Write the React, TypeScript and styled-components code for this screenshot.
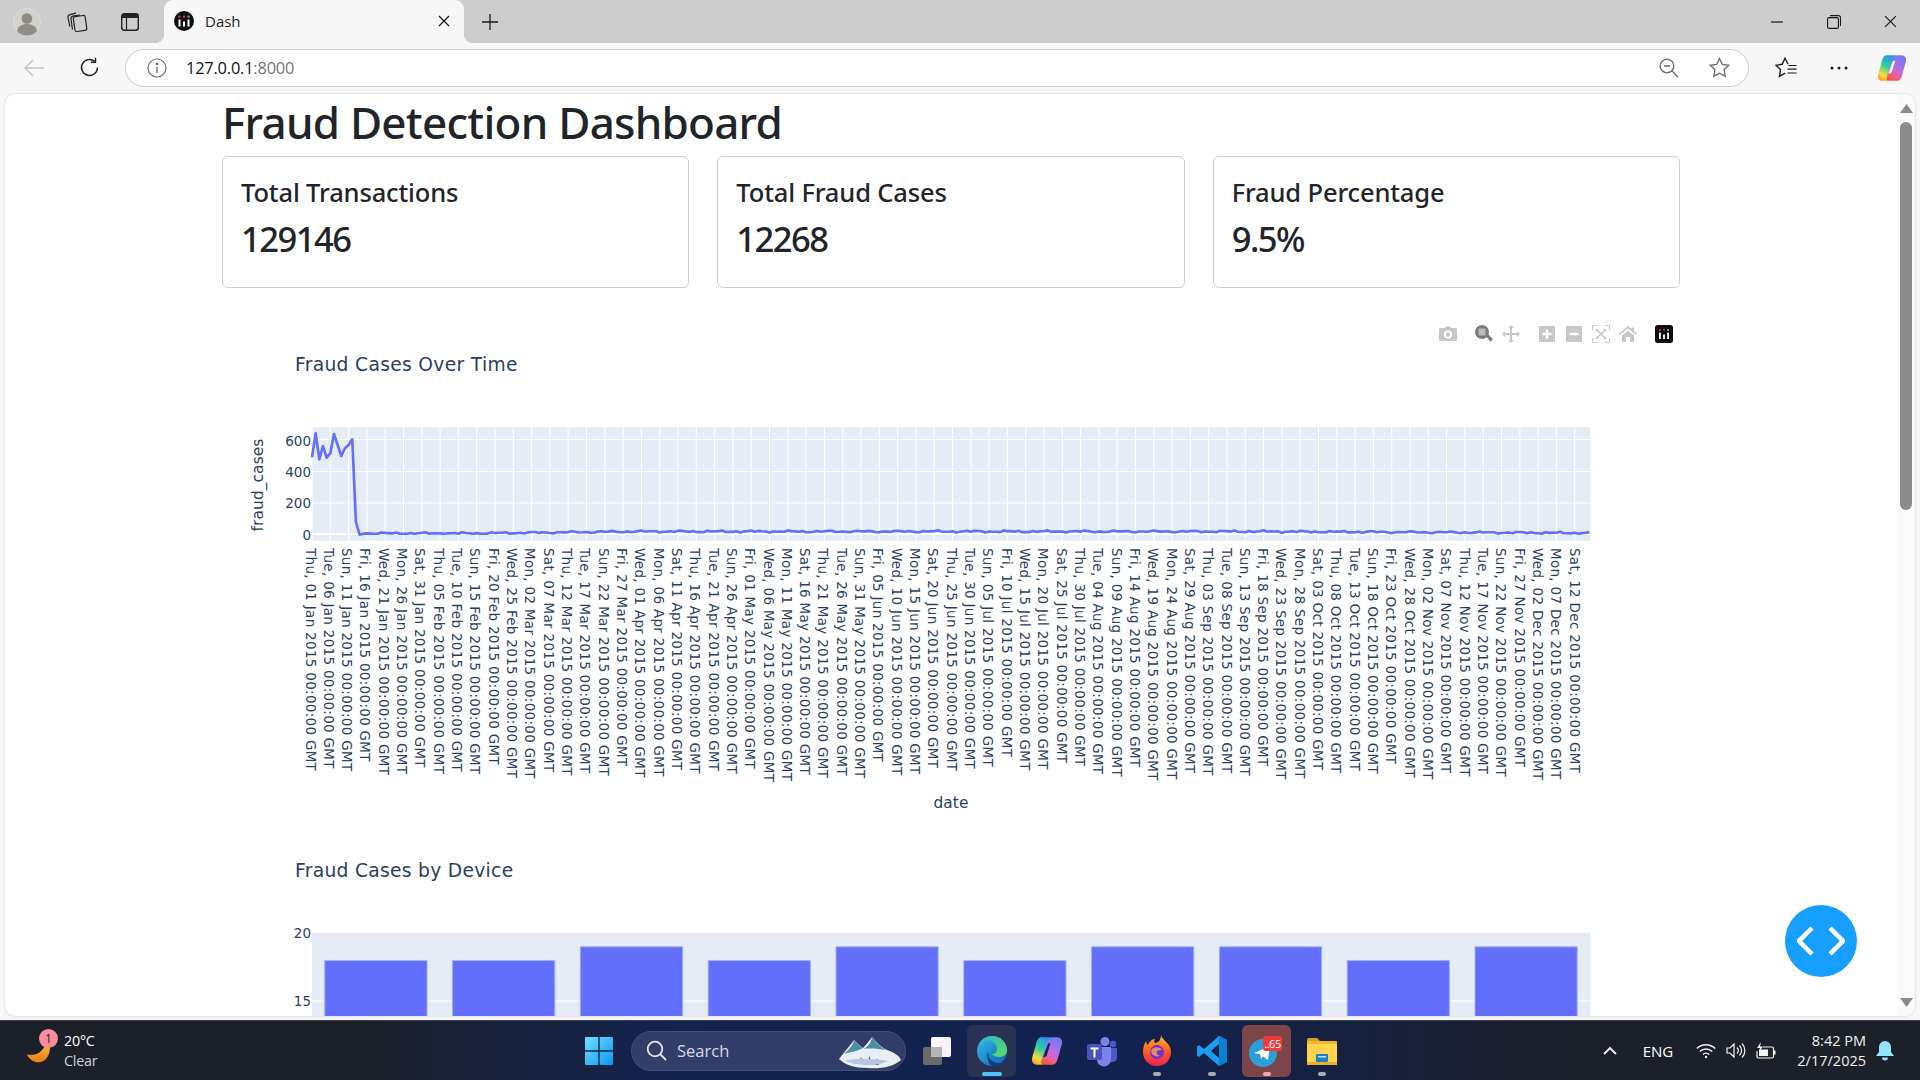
import React from "react";
import styled, { createGlobalStyle } from "styled-components";

const Global = createGlobalStyle`
  html, body { margin: 0; padding: 0; height: 100%; overflow: hidden; }
  #root { height: 100vh; }
  * { box-sizing: border-box; }
`;

const UI = `"Open Sans", "Noto Sans", sans-serif`;
const HEAD = `"Noto Sans", "Open Sans", sans-serif`;
const PLOT = `"DejaVu Sans", Verdana, sans-serif`;

const Screen = styled.div`
  height: 1080px; width: 1920px; display: flex; flex-direction: column;
  background: #f7f7f7; font-family: ${UI}; overflow: hidden;
`;
const TabStrip = styled.div`
  height: 43px; flex: none; display: flex; align-items: stretch;
  background: #cdcdcd; padding-left: 2px;
`;
const Slot = styled.div<{ $w?: number; $ml?: number }>`
  width: ${(p) => p.$w ?? 50}px; margin-left: ${(p) => p.$ml ?? 0}px; flex: none;
  display: flex; align-items: center; justify-content: center;
`;
const Tab = styled.div`
  position: relative; width: 300px; margin-left: 9px; flex: none;
  display: flex; align-items: center; padding: 0 8px 1px 10px; gap: 11px;
  background: #f7f7f7; border-radius: 9px 9px 0 0; color: #1c1c1c; font-size: 15px;
  &::before, &::after {
    content: ""; position: absolute; bottom: 0; width: 9px; height: 9px;
  }
  &::before { left: -9px; background: radial-gradient(circle at 0 0, transparent 9px, #f7f7f7 9.5px); }
  &::after { right: -9px; background: radial-gradient(circle at 100% 0, transparent 9px, #f7f7f7 9.5px); }
`;
const TabClose = styled.div`
  margin-left: auto; width: 24px; display: flex; justify-content: center;
`;
const WindowControls = styled.div`
  margin-left: auto; display: flex; padding-right: 1px;
`;
const Toolbar = styled.div`
  height: 51px; flex: none; display: flex; align-items: center;
  background: #f7f7f7; padding-left: 9px; padding-bottom: 2px;
`;
const Omnibox = styled.div`
  width: 1624px; height: 38px; margin-left: 10px; flex: none; display: flex; align-items: center;
  background: #fff; border: 1.5px solid #cfcfcf; border-radius: 19px; padding: 0 11px 0 21px;
`;
const Url = styled.div`
  flex: 1; margin-left: 19px; font-size: 16.4px; color: #111; letter-spacing: -0.2px;
  span { color: #767676; }
`;
const Viewport = styled.div`
  height: 922px; margin: 0 5px; flex: none; display: flex; background: #fff;
  border-radius: 10px; position: relative;
  box-shadow: 0 0 2px rgba(0,0,0,.22);
`;
const Page = styled.div`
  flex: 1; min-width: 0;
`;
const Container = styled.div`
  width: 1458px; margin: 0 auto; color: #212529;
`;
const Heading = styled.h1`
  margin: 0 0 5px; font-family: ${HEAD}; font-size: 44px; line-height: 57px; font-weight: 500;
  letter-spacing: -0.75px; color: #212529;
`;
const Cards = styled.div`
  display: flex; gap: 28px;
`;
const Card = styled.div`
  flex: 1; height: 132px; padding: 17px 18px; background: #fff; font-family: ${HEAD};
  border: 1px solid #d0d0d0; border-radius: 6px;
`;
const CardTitle = styled.div`
  font-size: 25.5px; line-height: 36px; font-weight: 500; letter-spacing: -0.15px; margin-bottom: 7px;
`;
const CardValue = styled.div`
  font-size: 34.6px; line-height: 44px; font-weight: 500; letter-spacing: -1.55px;
`;
const Graph = styled.div`
  position: relative; height: 506px; 
  svg { display: block; }
`;
const Graphs = styled.div`
  margin-top: 33px; height: 695px; overflow: hidden;
`;
const Modebar = styled.div`
  position: absolute; top: 4px; right: 7px; display: flex; gap: 18px;
`;
const ModeGroup = styled.div`
  display: flex; gap: 9px;
`;
const Scrollbar = styled.div`
  width: 18px; flex: none; display: flex; flex-direction: column; align-items: center; background: #fafafa;
  border-radius: 0 10px 10px 0;
`;
const ScrollArrow = styled.div`
  height: 28px; flex: none; display: flex; align-items: center; justify-content: center;
`;
const Thumb = styled.div`
  width: 12px; height: 388px; border-radius: 6px; background: #8b8b8b; flex: none;
`;
const ScrollSpace = styled.div`
  flex: 1;
`;
const Fab = styled.div`
  position: absolute; left: 1780px; top: 811px; width: 72px; height: 72px; border-radius: 50%;
  background: #169fff; display: flex; align-items: center; justify-content: center;
`;
const Gap = styled.div`
  height: 4px; flex: none; background: #f7f7f7;
`;
const Taskbar = styled.div`
  flex: 1; display: flex; align-items: center; color: #fff; padding-left: 26px;
  border-top: 1px solid #3a3d44;
  background: linear-gradient(90deg, #1c2028 0%, #1c2028 18%, #14234f 35%, #12214f 60%, #1b2030 78%, #1c2028 85%);
`;
const Weather = styled.div`
  width: 545px; flex: none; display: flex; align-items: center; gap: 2px;
`;
const WeatherIcon = styled.div`
  position: relative; width: 36px; height: 42px; margin-top: 0;
  svg { position: absolute; left: 0; bottom: 7px; }
`;
const WeatherBadge = styled.div`
  position: absolute; left: 13px; top: -1px; width: 19px; height: 19px; border-radius: 50%;
  background: #f88c9c; color: #3a1a20; font-size: 12px; line-height: 19px; text-align: center;
`;
const WeatherText = styled.div`
  font-size: 14.3px; line-height: 20px; letter-spacing: -.2px;
  span { display: block; color: #cfd1d6; }
`;
const StartBtn = styled.div`
  width: 56px; flex: none; display: flex; justify-content: center;
`;
const SearchBox = styled.div`
  width: 275px; height: 40px; margin-left: 4px; margin-right: 3px; flex: none; display: flex; align-items: center; gap: 10px;
  padding-left: 14px; border-radius: 20px; background: #323d69; border: 1px solid #454f78;
  font-size: 16.5px; color: #d9dbe4; position: relative;
`;
const SearchArt = styled.div`
  position: absolute; right: 2px; top: 3px;
`;
const TaskIcon = styled.div<{ $state?: "active" | "alert" }>`
  position: relative; width: 55px; height: 52px; flex: none; display: flex; align-items: center; justify-content: center;
  &::before {
    content: ""; position: absolute; left: 3px; right: 3px; top: 0; bottom: 0; border-radius: 6px;
    background: ${(p) => (p.$state === "active" ? "#2a3152" : p.$state === "alert" ? "#7d4449" : "transparent")};
  }
  > * { position: relative; }
`;
const RunDot = styled.span<{ $color: string; $w: number }>`
  position: absolute !important; bottom: 1px; left: 50%; transform: translateX(-50%);
  width: ${(p) => p.$w}px; height: 4px; border-radius: 2px; background: ${(p) => p.$color};
`;
const Tray = styled.div`
  margin-left: auto; display: flex; align-items: center; padding-right: 16px;
`;
const TrayItem = styled.div<{ $w: number }>`
  width: ${(p) => p.$w}px; flex: none; display: flex; align-items: center; justify-content: center; font-size: 15px;
`;
const Clock = styled.div`
  width: 85px; flex: none; text-align: right; font-size: 14.5px; line-height: 20px; color: #f2f2f2; white-space: nowrap;
`;

/* ---------- chrome icons ---------- */
const Avatar = () => (
  <svg width="28" height="28" viewBox="0 0 28 28">
    <circle cx="14" cy="14" r="13.5" fill="#d3d1cc" stroke="#dedcd8" />
    <circle cx="14" cy="10.5" r="5.3" fill="#8f8c86" />
    <path d="M4 23c1-5 5-7 10-7s9 2 10 7c-2.500 3-6 4.500-10 4.500S6.500 26 4 23z" fill="#8f8c86" />
  </svg>
);
const CollectionsIcon = () => (
  <svg width="22" height="22" viewBox="0 0 22 22" fill="none" stroke="#222" strokeWidth="1.2">
    <rect x="8" y="5" width="12" height="15" rx="2" transform="rotate(-8 14 12)" />
    <path d="M6.500 18.500 5 8c-.2-1.500.5-2.500 2-2.800L14 4" />
    <path d="M3.800 15.500 2 6.500C1.800 5 2.500 4 4 3.700L10 2.200" />
  </svg>
);
const VerticalTabsIcon = () => (
  <svg width="20" height="20" viewBox="0 0 20 20" fill="none">
    <rect x="1.700" y="1.700" width="16.600" height="16.600" rx="2.500" stroke="#222" strokeWidth="1.400" />
    <path d="M2 4a2 2 0 0 1 2-2h12a2 2 0 0 1 2 2v2H2z" fill="#222" />
    <path d="M6.500 6v12" stroke="#222" strokeWidth="1.200" />
  </svg>
);
const DashLogo = ({ size = 20, round = true }: { size?: number; round?: boolean }) => (
  <svg width={size} height={size} viewBox="0 0 20 20">
    {round ? <circle cx="10" cy="10" r="10" fill="#111" /> : <rect width="20" height="20" rx="3" fill="#0a0a0a" />}
    <rect x="4.500" y="4.600" width="2" height="2" fill="#e0336f" />
    <rect x="9" y="4.600" width="2" height="2" fill="#e0336f" />
    <rect x="13.500" y="4.600" width="2" height="2" fill="#6ab7d8" />
    <rect x="4.500" y="8.500" width="2" height="7" fill="#fff" />
    <rect x="9" y="10.500" width="2" height="5" fill="#fff" />
    <rect x="13.500" y="8.500" width="2" height="7" fill="#fff" />
  </svg>
);
const Cross = ({ s = 12, w = 1.3 }: { s?: number; w?: number }) => (
  <svg width={s} height={s} viewBox="0 0 12 12" stroke="#1a1a1a" strokeWidth={w}>
    <path d="M1 1l10 10M11 1 1 11" />
  </svg>
);
const Plus = () => (
  <svg width="18" height="18" viewBox="0 0 18 18" stroke="#1a1a1a" strokeWidth="1.300"><path d="M9 1v16M1 9h16" /></svg>
);
const Minimize = () => (
  <svg width="14" height="14" viewBox="0 0 14 14" stroke="#1a1a1a" strokeWidth="1.200"><path d="M1 7h12" /></svg>
);
const Restore = () => (
  <svg width="14" height="14" viewBox="0 0 14 14" fill="none" stroke="#1a1a1a" strokeWidth="1.100">
    <rect x=".6" y="2.600" width="10.800" height="10.800" rx="1.500" />
    <path d="M3 .6h8.500a2 2 0 0 1 2 2V11" />
  </svg>
);
const BackArrow = () => (
  <svg width="20" height="18" viewBox="0 0 20 18" fill="none" stroke="#c4c4c4" strokeWidth="1.400"><path d="M20 9H1M9 1 1 9l8 8" /></svg>
);
const Reload = () => (
  <svg width="21" height="21" viewBox="0 0 21 21" fill="none" stroke="#1c1c1c" strokeWidth="1.400">
    <path d="M18.500 10.500a8 8 0 1 1-2.700-6" />
    <path d="M16.500 .8v4.500H12" />
  </svg>
);
const InfoIcon = () => (
  <svg width="20" height="20" viewBox="0 0 20 20" fill="none" stroke="#6d6d6d" strokeWidth="1.200">
    <circle cx="10" cy="10" r="9" />
    <path d="M10 9v6" strokeWidth="1.400" />
    <circle cx="10" cy="6" r=".7" fill="#6d6d6d" />
  </svg>
);
const ZoomOutIcon = () => (
  <svg width="20" height="20" viewBox="0 0 20 20" fill="none" stroke="#6b6b6b" strokeWidth="1.300">
    <circle cx="8" cy="8" r="6.800" />
    <path d="M5 8h6M13 13l6 6" />
  </svg>
);
const StarIcon = () => (
  <svg width="21" height="21" viewBox="0 0 21 21" fill="none" stroke="#6b6b6b" strokeWidth="1.300">
    <path d="M10.500 1.500l2.800 5.900 6.400.9-4.600 4.500 1.100 6.400-5.700-3-5.700 3 1.100-6.400L1.300 8.300l6.400-.9z" />
  </svg>
);
const FavoritesIcon = () => (
  <svg width="22" height="21" viewBox="0 0 22 21" fill="none" stroke="#1c1c1c" strokeWidth="1.400">
    <path d="M13 7.300 10 1.300 7.200 7.300 1 8.200l4.600 4.500-1.200 6.700 5.800-3.200" />
    <path d="M13.500 8.500h8M12.500 12.200h9M12.500 16h9" strokeWidth="1.200" />
  </svg>
);
const Dots = () => (
  <svg width="18" height="4" viewBox="0 0 18 4" fill="#1c1c1c">
    <circle cx="2" cy="2" r="1.500" /><circle cx="9" cy="2" r="1.500" /><circle cx="16" cy="2" r="1.500" />
  </svg>
);
const Copilot = ({ id, size, slit }: { id: string; size: number; slit: string }) => (
  <svg width={size} height={size} viewBox="0 0 28 28">
    <defs>
      <linearGradient id={`${id}a`} x1="0.700" y1="0" x2="0.200" y2="1">
        <stop offset="0" stopColor="#2a8ff0" />
        <stop offset=".45" stopColor="#2fd0a0" />
        <stop offset=".8" stopColor="#f3df3a" />
        <stop offset="1" stopColor="#f79a30" />
      </linearGradient>
      <linearGradient id={`${id}b`} x1="0.700" y1="0" x2="0.300" y2="1">
        <stop offset="0" stopColor="#6f7cf2" />
        <stop offset=".5" stopColor="#b86ce6" />
        <stop offset=".8" stopColor="#f0609a" />
        <stop offset="1" stopColor="#f5583a" />
      </linearGradient>
    </defs>
    <path d="M9 2h8c1.800 0 2.500 1.400 2 3L14 21c-.9 3-2.800 5-5.500 5H5C1.800 26 .2 23 1 20L4.800 6.500C5.500 3.800 6.800 2 9 2z" fill={`url(#${id}a)`} />
    <path d="M19 26h-8c-1.800 0-2.500-1.400-2-3l5-16c.9-3 2.800-5 5.500-5H23c3.200 0 4.800 3 4 6l-3.800 13.500C22.500 24.200 21.200 26 19 26z" fill={`url(#${id}b)`} />
    <path d="M10.500 19.500 14.500 8.500c.6-1.500 1.800-1.500 2.500-1L13.500 18.500z" fill={slit} />
  </svg>
);

/* ---------- modebar ---------- */
const MB = "#c7c7c7";
const MCamera = () => (
  <svg width="18" height="18" viewBox="0 0 18 18"><path fill={MB} fillRule="evenodd" d="M6 3l1-1.500h4L12 3h4.500A1.500 1.500 0 0 1 18 4.500v10a1.500 1.500 0 0 1-1.500 1.500h-15A1.500 1.500 0 0 1 0 14.500v-10A1.500 1.500 0 0 1 1.500 3zM9 5.500a4 4 0 1 0 0 8 4 4 0 0 0 0-8zm0 1.800a2.200 2.200 0 1 1 0 4.400 2.200 2.200 0 0 1 0-4.400z" /></svg>
);
const MZoom = () => (
  <svg width="18" height="18" viewBox="0 0 18 18">
    <circle cx="7" cy="7" r="7" fill="#7c7c7c" />
    <path d="M11 11l1.900-1.900 5 5-2.400 2.900z" fill="#7c7c7c" />
    <rect x="3.500" y="3.500" width="7" height="7" rx=".8" fill="#b9b9b9" />
  </svg>
);
const MPan = () => (
  <svg width="18" height="18" viewBox="0 0 18 18"><path fill={MB} d="M9 0l3 3h-2v5h5V6l3 3-3 3v-2h-5v5h2l-3 3-3-3h2v-5H3v2L0 9l3-3v2h5V3H6z" /></svg>
);
const MPlus = () => (
  <svg width="18" height="18" viewBox="0 0 18 18"><path fill={MB} fillRule="evenodd" d="M1 1h16v16H1zm6.700 3.500v3.200H4.500v2.600h3.200v3.200h2.600v-3.200h3.200V7.700h-3.200V4.500z" /></svg>
);
const MMinus = () => (
  <svg width="18" height="18" viewBox="0 0 18 18"><path fill={MB} fillRule="evenodd" d="M1 1h16v16H1zm3.500 6.700v2.600h9V7.700z" /></svg>
);
const MAuto = () => (
  <svg width="18" height="18" viewBox="0 0 18 18" fill="none" stroke={MB}>
    <path d="M.5 5V.5H5M13 .5h4.500V5M17.500 13v4.500H13M5 17.500H.5V13" />
    <path d="M5 5l8 8M13 5l-8 8" strokeWidth="1.500" />
    <path d="M4 4h3L4 7zM14 4v3l-3-3zM14 14h-3l3-3zM4 14v-3l3 3z" fill={MB} stroke="none" />
  </svg>
);
const MHome = () => (
  <svg width="18" height="18" viewBox="0 0 18 18"><path fill={MB} d="M9 1L0 8.500l1 1.300L9 3.500l8 6.300 1-1.300-3-2.400V2.500h-2.500v1.600zM3 10.500L9 5.500l6 5V17h-4v-5H7v5H3z" /></svg>
);

/* ---------- taskbar icons ---------- */
const Moon = () => (
  <svg width="28" height="28" viewBox="0 0 32 32">
    <defs><linearGradient id="moon" x1="0" y1="0" x2="0" y2="1"><stop offset="0" stopColor="#f9c23c" /><stop offset="1" stopColor="#ee7d14" /></linearGradient></defs>
    <path d="M26 4c3 9 1 17-4 22-6 5-16 4-21-6 6 1 11 0 14-2 4-3 7-8 11-14z" fill="url(#moon)" />
  </svg>
);
const WinLogo = () => (
  <svg width="30" height="30" viewBox="0 0 30 30">
    <defs><linearGradient id="win" x1="0" y1="0" x2="1" y2="1"><stop offset="0" stopColor="#6fe0fb" /><stop offset="1" stopColor="#0d95f2" /></linearGradient></defs>
    <path fill="url(#win)" d="M1 2a1 1 0 0 1 1-1h12.300v13.300H1zM15.700 1H28a1 1 0 0 1 1 1v12.300H15.700zM1 15.700h13.300V29H2a1 1 0 0 1-1-1zM15.700 15.700H29V28a1 1 0 0 1-1 1H15.700z" />
  </svg>
);
const SearchGlass = () => (
  <svg width="21" height="21" viewBox="0 0 21 21" fill="none" stroke="#e4e6ee" strokeWidth="1.800">
    <circle cx="9" cy="9" r="7.300" /><path d="M14.500 14.500l5.500 5.500" />
  </svg>
);
const Mountains = () => (
  <svg width="66" height="34" viewBox="0 0 66 34">
    <path d="M2 24C8 16 12 12 17 5c3 3 6 6 9 8 3-3 6-7 9-11 5 6 10 11 15 13 6 2 12 5 14 10-8 7-20 9-34 8C18 33 8 30 2 24z" fill="#e9eef4" />
    <path d="M17 5c-1 6-6 10-10 14 6-2 12-2 19-6-4-2-6-5-9-8zM35 2c-1 6-4 9-8 12 7-1 15 0 22 1-6-3-10-8-14-13z" fill="#4b8fa8" />
    <path d="M22 28l2-6 2 6zM30 30l2.500-9 2.500 9zM38 30l2-7 2 7z" fill="#2f6f56" />
    <path d="M8 26c10-3 24-3 44 0-14 6-32 5-44 0z" fill="#b9c5e0" />
  </svg>
);
const TaskView = () => (
  <svg width="30" height="30" viewBox="0 0 30 30">
    <rect x="1" y="11" width="19" height="18" rx="2" fill="#6a6a6a" />
    <rect x="9" y="1" width="20" height="20" rx="2" fill="#f4f4f4" />
    <rect x="9" y="11" width="11" height="10" fill="#b5b5b5" />
  </svg>
);
const Edge = () => (
  <svg width="32" height="32" viewBox="0 0 32 32">
    <defs>
      <linearGradient id="edA" x1="0" y1="0" x2="1" y2="1"><stop offset="0" stopColor="#36c0e8" /><stop offset="1" stopColor="#0b5fb0" /></linearGradient>
      <linearGradient id="edB" x1="0" y1="0" x2="1" y2="1"><stop offset="0" stopColor="#2bb6d8" /><stop offset="1" stopColor="#5cdc5a" /></linearGradient>
    </defs>
    <circle cx="16" cy="16" r="15" fill="url(#edA)" />
    <path d="M2 14C3 6 9 1 16 1c9 0 15 7 15 14 0 5-4 7-8 7-3 0-6-1-7-3 3 0 5-2 5-5 0-5-4-9-9-9C7 5 3 9 2 14z" fill="url(#edB)" />
    <path d="M12 15c-1 7 4 13 11 13 2 0 3-.5 4-1-3 3-7 4.500-11 4C13 30 10 24 12 15z" fill="#0d3f86" />
  </svg>
);
const Teams = () => (
  <svg width="32" height="32" viewBox="0 0 32 32">
    <circle cx="19" cy="6.500" r="4.500" fill="#7b83eb" />
    <circle cx="27" cy="9" r="3.300" fill="#5059c9" />
    <path d="M22 13h9v9c0 3-2 5-5 5s-4-2-4-5z" fill="#5059c9" />
    <path d="M10 12h15v12a7 7 0 0 1-14 1z" fill="#7b83eb" />
    <rect x="1" y="9" width="15" height="16" rx="2" fill="#4b53bc" />
    <path d="M4.500 12.500h8v2h-3v8h-2v-8h-3z" fill="#fff" />
  </svg>
);
const Firefox = () => (
  <svg width="32" height="32" viewBox="0 0 32 32">
    <defs>
      <linearGradient id="ff" x1="0.500" y1="0" x2="0.500" y2="1"><stop offset="0" stopColor="#ffb52e" /><stop offset=".45" stopColor="#ff6a1f" /><stop offset="1" stopColor="#e9234f" /></linearGradient>
    </defs>
    <path d="M20 0c1 4 5 6 7 9 2 2 3 5 3 8 0 8-6 14-14 14S2 25 2 17c0-4 1-8 3-11 0 2 1 3 2 4 1-3 4-6 7-6-1 2-1 3 0 4 3 0 6-3 6-8z" fill="url(#ff)" />
    <circle cx="16" cy="17" r="7" fill="#7a2fd0" />
    <path d="M11 14c3-2 8-2 10 1-2 0-4 0-5 1-1 2 0 4 3 5-3 1-6 0-8-2-1-2-1-4 0-5z" fill="#ffb63d" opacity=".75" />
  </svg>
);
const VSCode = () => (
  <svg width="32" height="32" viewBox="0 0 32 32">
    <path d="M23 1l8 4v22l-8 4L8 18l-5 4-2-1.500V11.500L3 10l5 4zM23 9l-8 7 8 7z" fill="#1b9ceb" />
    <path d="M23 1l8 4v22l-8 4z" fill="#0b7fd0" />
  </svg>
);
const Telegram = () => (
  <svg width="40" height="34" viewBox="0 0 40 34">
    <circle cx="16" cy="19" r="14" fill="#2a9fd8" />
    <path d="M7 19l16-7-2 14-5-3.500-2 2.500-1-5z" fill="#fff" />
    <rect x="16" y="2" width="19" height="15" rx="3" fill="#ee3a3a" />
    <text x="25.500" y="13.500" textAnchor="middle" fontSize="11" fill="#fff" fontFamily="'Open Sans', sans-serif" letterSpacing="-.5">..65</text>
  </svg>
);
const Folder = () => (
  <svg width="32" height="32" viewBox="0 0 32 32">
    <path d="M1 5a2 2 0 0 1 2-2h8l3 3h-13z" fill="#d8a11f" />
    <rect x="1" y="6" width="30" height="24" rx="1.500" fill="#ffd34f" />
    <rect x="1" y="6" width="30" height="3" fill="#f3b92e" />
    <rect x="10" y="19" width="12" height="8" rx="1" fill="#1a82c8" />
    <rect x="12" y="21" width="8" height="1.500" fill="#bfe3f8" />
    <rect x="1" y="27" width="30" height="3" fill="#e8b22e" />
  </svg>
);
const Chevron = () => (
  <svg width="14" height="9" viewBox="0 0 14 9" fill="none" stroke="#f2f2f2" strokeWidth="1.800"><path d="M1 8l6-6 6 6" /></svg>
);
const Wifi = () => (
  <svg width="20" height="16" viewBox="0 0 20 16" fill="none" stroke="#f4f4f4" strokeWidth="1.400">
    <path d="M.8 5.500a13 13 0 0 1 18.400 0M3.800 8.500a9 9 0 0 1 12.400 0M6.800 11.500a4.500 4.500 0 0 1 6.400 0" />
    <circle cx="10" cy="14" r="1.200" fill="#f4f4f4" stroke="none" />
  </svg>
);
const Speaker = () => (
  <svg width="20" height="17" viewBox="0 0 20 17" fill="none" stroke="#f4f4f4" strokeWidth="1.200">
    <path d="M1 6v5h3l4 4V2L4 6z" />
    <path d="M11 5.500a4 4 0 0 1 0 6M13.500 3.500a7 7 0 0 1 0 10M16 1.500a10 10 0 0 1 0 14" />
  </svg>
);
const Battery = () => (
  <svg width="20" height="18" viewBox="0 0 20 18" fill="none" stroke="#f4f4f4" strokeWidth="1.200">
    <path d="M7 5h9a1.500 1.500 0 0 1 1.500 1.500v8A1.500 1.500 0 0 1 16 16H2.500A1.500 1.500 0 0 1 1 14.500V9" />
    <rect x="18" y="8.500" width="1.500" height="4" fill="#f4f4f4" stroke="none" />
    <rect x="3" y="7.500" width="9" height="6.500" fill="#f4f4f4" stroke="none" />
    <path d="M5 0L1 6h3l-1 4 4-5.500H4z" fill="#f4f4f4" stroke="none" />
  </svg>
);
const Bell = () => (
  <svg width="18" height="20" viewBox="0 0 18 20" fill="#93e4fb">
    <path d="M9 0a6 6 0 0 1 6 6v5l3 4H0l3-4V6a6 6 0 0 1 6-6z" />
    <path d="M6 16.500h6a3 3 0 0 1-6 0z" />
  </svg>
);
const Code = () => (
  <svg width="48" height="30" viewBox="0 0 48 30" fill="none" stroke="#fff" strokeWidth="4.500">
    <path d="M15 2 2 15l13 13M33 2l13 13-13 13" />
  </svg>
);
const TriUp = () => (
  <svg width="13" height="9" viewBox="0 0 13 9"><path d="M6.500 0 13 9H0z" fill="#8a8a8a" /></svg>
);
const TriDown = () => (
  <svg width="13" height="9" viewBox="0 0 13 9"><path d="M0 0h13L6.500 9z" fill="#8a8a8a" /></svg>
);

/* ---------- charts ---------- */
const TICK = "#2a3f5f";
const PL = 90, PR = 1368.5, PT = 106;

const head = [142, 70, 148, 108, 143, 130, 72, 105, 138, 115, 105, 88, 335, 374];
const seriesY = (i: number) => {
  if (i < head.length) return 410 + head[i] / 3 - 321;
  const base = i < 45 ? 4 : i < 90 ? 4 + (i - 45) * 0.28 : i < 260 ? 16 : 16 - (i - 260) * 0.11;
  const noise = Math.sin(i * 1.7) * 3 + Math.sin(i * 0.63 + 1) * 3 + Math.sin(i * 3.1) * 2;
  return 534 - 321 - Math.max(1, base + noise) * 0.158;
};
const linePts = Array.from({ length: 350 }, (_, i) => `${PL + i * 3.66},${seriesY(i).toFixed(1)}`).join(" ");

const dayNames = ["Sun", "Mon", "Tue", "Wed", "Thu", "Fri", "Sat"];
const monthNames = ["Jan", "Feb", "Mar", "Apr", "May", "Jun", "Jul", "Aug", "Sep", "Oct", "Nov", "Dec"];
const tickLabel = (i: number) => {
  const d = new Date(Date.UTC(2015, 0, 1 + i * 5));
  const dd = String(d.getUTCDate()).padStart(2, "0");
  return `${dayNames[d.getUTCDay()]}, ${dd} ${monthNames[d.getUTCMonth()]} 2015 00:00:00 GMT`;
};
const ticks = Array.from({ length: 70 }, (_, i) => i);

const LineChart = () => (
  <svg width="1457" height="506" viewBox="0 0 1457 506" fontFamily={PLOT}>
    <text x="73" y="50" fontSize="18.700" letterSpacing=".31" fill={TICK}>Fraud Cases Over Time</text>
    <rect x={PL} y={PT} width={PR - PL} height={114} fill="#e5ecf6" />
    {ticks.map((i) => (
      <line key={i} x1={PL + i * 18.3} x2={PL + i * 18.3} y1={PT} y2={220} stroke="#fff" strokeWidth="1.100" />
    ))}
    {[118.5, 150.5, 182].map((y) => (
      <line key={y} x1={PL} x2={PR} y1={y} y2={y} stroke="#fff" strokeWidth="1.100" />
    ))}
    <line x1={PL} x2={PR} y1={213} y2={213} stroke="#fff" strokeWidth="2.200" />
    <polyline points={linePts} fill="none" stroke="#636efa" strokeWidth="2.600" strokeLinejoin="round" />
    {[["600", 124.5], ["400", 155.5], ["200", 187], ["0", 218.5]].map(([t, y]) => (
      <text key={t} x="89" y={y} textAnchor="end" fontSize="13.500" fill={TICK}>{t}</text>
    ))}
    {ticks.map((i) => (
      <text key={i} transform={`translate(${83.5 + i * 18.32} 227) rotate(90)`} fontSize="13.500" letterSpacing=".3" fill={TICK}>{tickLabel(i)}</text>
    ))}
    <text transform="translate(41 164) rotate(-90)" textAnchor="middle" fontSize="15.400" letterSpacing=".1" fill={TICK}>fraud_cases</text>
    <text x="729" y="487" textAnchor="middle" fontSize="15.400" letterSpacing=".1" fill={TICK}>date</text>
  </svg>
);

const barVals = [18, 18, 19, 18, 19, 18, 19, 19, 18, 19];
const BarChart = () => (
  <svg width="1457" height="506" viewBox="0 0 1457 506" fontFamily={PLOT}>
    <text x="73" y="50" fontSize="18.700" letterSpacing=".29" fill={TICK}>Fraud Cases by Device</text>
    <rect x={PL} y={PT} width={PR - PL} height={300} fill="#e5ecf6" />
    <line x1={PL} x2={PR} y1={174} y2={174} stroke="#fff" strokeWidth="1.100" />
    {barVals.map((v, i) => {
      const y = PT + (20 - v) * 13.8;
      return (
        <rect key={i} x={PL + 12.8 + i * 127.8} y={y} width={102.2} height={406 - y} fill="#636efa" stroke="#a4aaf5" strokeWidth="1" />
      );
    })}
    <text x="89" y="111" textAnchor="end" fontSize="13.500" fill={TICK}>20</text>
    <text x="89" y="179" textAnchor="end" fontSize="13.500" fill={TICK}>15</text>
  </svg>
);

const stats = [
  { title: "Total Transactions", value: "129146" },
  { title: "Total Fraud Cases", value: "12268" },
  { title: "Fraud Percentage", value: "9.5%" },
];

export default function App() {
  return (
    <Screen>
      <Global />
      <TabStrip>
        <Slot><Avatar /></Slot>
        <Slot><CollectionsIcon /></Slot>
        <Slot $ml={3}><VerticalTabsIcon /></Slot>
        <Tab>
          <DashLogo />
          Dash
          <TabClose><Cross /></TabClose>
        </Tab>
        <Slot $w={52}><Plus /></Slot>
        <WindowControls>
          <Slot $w={57}><Minimize /></Slot>
          <Slot $w={57}><Restore /></Slot>
          <Slot $w={57}><Cross s={13} w={1.1} /></Slot>
        </WindowControls>
      </TabStrip>
      <Toolbar>
        <Slot><BackArrow /></Slot>
        <Slot $w={51} $ml={5}><Reload /></Slot>
        <Omnibox>
          <InfoIcon />
          <Url>127.0.0.1<span>:8000</span></Url>
          <Slot $w={36}><ZoomOutIcon /></Slot>
          <Slot $w={36} $ml={14}><StarIcon /></Slot>
        </Omnibox>
        <Slot $ml={12}><FavoritesIcon /></Slot>
        <Slot $ml={3}><Dots /></Slot>
        <Slot $ml={3}><Copilot id="cpa" size={30} slit="#f7f7f7" /></Slot>
      </Toolbar>
      <Viewport>
        <Page>
          <Container>
            <Heading>Fraud Detection Dashboard</Heading>
            <Cards>
              {stats.map((s) => (
                <Card key={s.title}>
                  <CardTitle>{s.title}</CardTitle>
                  <CardValue>{s.value}</CardValue>
                </Card>
              ))}
            </Cards>
            <Graphs>
              <Graph>
                <LineChart />
                <Modebar>
                  <MCamera />
                  <ModeGroup><MZoom /><MPan /></ModeGroup>
                  <ModeGroup><MPlus /><MMinus /><MAuto /><MHome /></ModeGroup>
                  <DashLogo size={18} round={false} />
                </Modebar>
              </Graph>
              <Graph>
                <BarChart />
              </Graph>
            </Graphs>
          </Container>
        </Page>
        <Scrollbar>
          <ScrollArrow><TriUp /></ScrollArrow>
          <Thumb />
          <ScrollSpace />
          <ScrollArrow><TriDown /></ScrollArrow>
        </Scrollbar>
        <Fab><Code /></Fab>
      </Viewport>
      <Gap />
      <Taskbar>
        <Weather>
          <WeatherIcon>
            <Moon />
            <WeatherBadge>1</WeatherBadge>
          </WeatherIcon>
          <WeatherText>20°C<span>Clear</span></WeatherText>
        </Weather>
        <StartBtn><WinLogo /></StartBtn>
        <SearchBox>
          <SearchGlass />
          Search
          <SearchArt><Mountains /></SearchArt>
        </SearchBox>
        <TaskIcon><TaskView /></TaskIcon>
        <TaskIcon $state="active"><Edge /><RunDot $color="#4fc3f7" $w={20} /></TaskIcon>
        <TaskIcon><Copilot id="cpb" size={32} slit="#13224f" /></TaskIcon>
        <TaskIcon><Teams /></TaskIcon>
        <TaskIcon><Firefox /><RunDot $color="#a9abb4" $w={8} /></TaskIcon>
        <TaskIcon><VSCode /><RunDot $color="#a9abb4" $w={8} /></TaskIcon>
        <TaskIcon $state="alert"><Telegram /><RunDot $color="#f2a7ae" $w={8} /></TaskIcon>
        <TaskIcon><Folder /><RunDot $color="#a9abb4" $w={8} /></TaskIcon>
        <Tray>
          <TrayItem $w={30}><Chevron /></TrayItem>
          <TrayItem $w={66}>ENG</TrayItem>
          <TrayItem $w={30}><Wifi /></TrayItem>
          <TrayItem $w={30}><Speaker /></TrayItem>
          <TrayItem $w={30}><Battery /></TrayItem>
          <Clock>8:42 PM<br />2/17/2025</Clock>
          <TrayItem $w={38}><Bell /></TrayItem>
        </Tray>
      </Taskbar>
    </Screen>
  );
}
